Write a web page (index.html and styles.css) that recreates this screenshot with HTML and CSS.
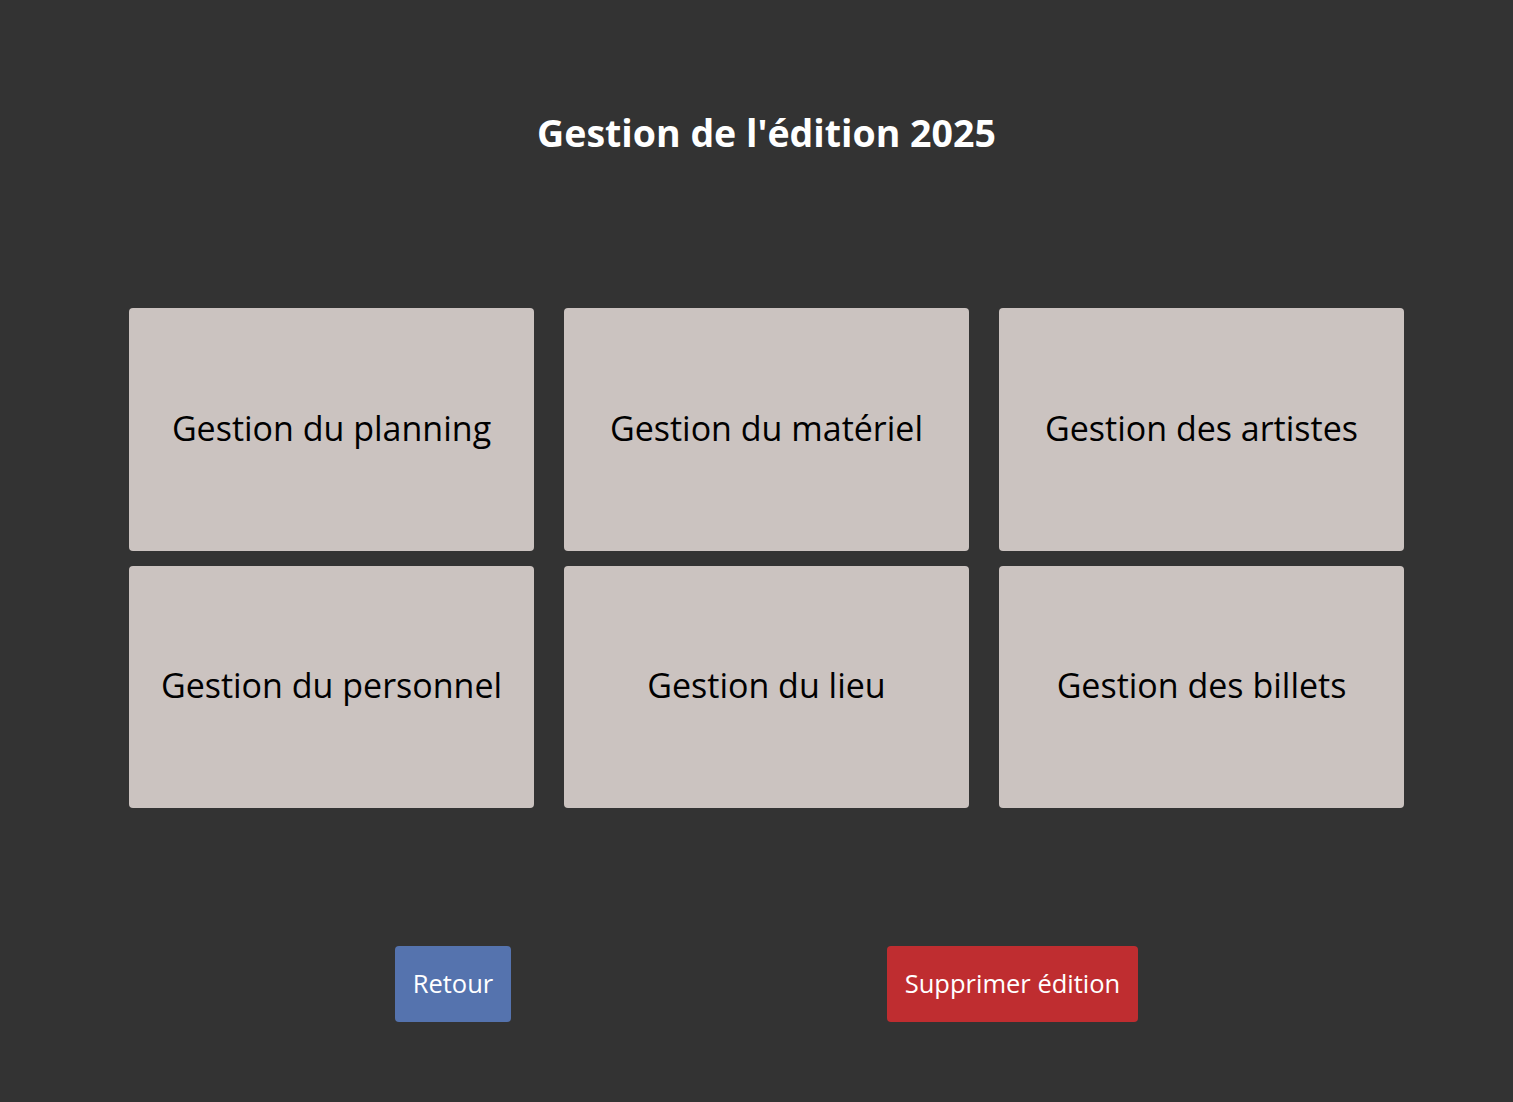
FILE: index.html
```html
<!DOCTYPE html>
<html lang="fr">
<head>
<meta charset="utf-8">
<title>Gestion de l'édition 2025</title>
<link rel="stylesheet" href="styles.css">
</head>
<body>
<main class="page">
  <h1 class="title">Gestion de l'édition 2025</h1>
  <section class="grid">
    <a class="card">Gestion du planning</a>
    <a class="card">Gestion du matériel</a>
    <a class="card">Gestion des artistes</a>
    <a class="card">Gestion du personnel</a>
    <a class="card">Gestion du lieu</a>
    <a class="card">Gestion des billets</a>
  </section>
  <div class="actions">
    <button class="btn btn-back">Retour</button>
    <button class="btn btn-delete">Supprimer édition</button>
  </div>
</main>
</body>
</html>
```
FILE: styles.css
```css
html, body {
  margin: 0;
  padding: 0;
  background: #333333;
  height: 100%;
}
body {
  font-family: "Open Sans", "Noto Sans", sans-serif;
  color: #000;
}
.page {
  padding-left: 20px;
  display: flex;
  flex-direction: column;
  align-items: center;
}
.title {
  margin: 108px 0 0;
  height: 50px;
  line-height: 50px;
  font-size: 37.5px;
  font-weight: 700;
  color: #ffffff;
}
.grid {
  margin-top: 150px;
  display: grid;
  grid-template-columns: repeat(3, 405px);
  grid-template-rows: 243px 242px;
  column-gap: 30px;
  row-gap: 15px;
}
.card {
  background: #cbc3c0;
  border-radius: 4px;
  display: flex;
  align-items: center;
  justify-content: center;
  font-size: 34px;
  color: #000;
  padding-bottom: 4px;
  box-sizing: border-box;
}
.actions {
  margin-top: 138px;
  display: flex;
  gap: 376px;
}
.btn {
  height: 76px;
  border: none;
  border-radius: 4px;
  color: #ffffff;
  font-family: "Open Sans", "Noto Sans", sans-serif;
  font-size: 25.5px;
  padding: 0 0 2px;
}
.btn-back {
  background: #5573ae;
  width: 116px;
}
.btn-delete {
  background: #bf2d30;
  width: 251px;
}
```
